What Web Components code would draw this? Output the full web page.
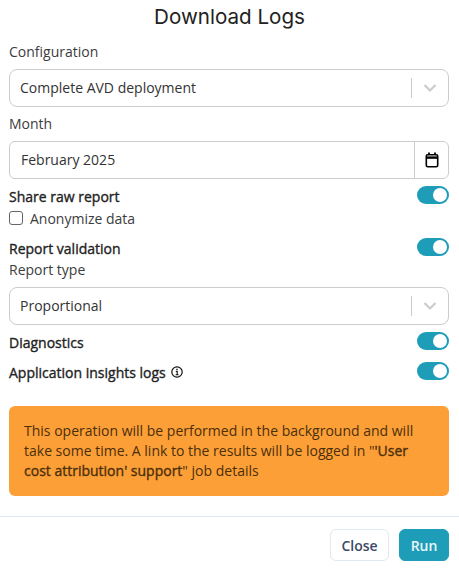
<!DOCTYPE html>
<html lang="en">
<head>
<meta charset="utf-8">
<title>Download Logs</title>
<style>
  html, body { margin: 0; background: #fff; }
  body { font-family: "Open Sans", "Liberation Sans", sans-serif; font-size: 14px; color: #333; }
  b { font-weight: 500; -webkit-text-stroke: .35px currentColor; }
</style>
</head>
<body>
<log-dialog heading="Download Logs">
  <form-field label="Configuration"><select-box value="Complete AVD deployment"></select-box></form-field>
  <form-field label="Month" style="margin-top:6px"><month-input value="February 2025"></month-input></form-field>
  <toggle-row style="margin-top:7px">Share raw report</toggle-row>
  <check-row>Anonymize data</check-row>
  <toggle-row style="margin-top:10px">Report validation</toggle-row>
  <form-field label="Report type" style="margin-top:3px"><select-box value="Proportional"></select-box></form-field>
  <toggle-row style="margin-top:7px">Diagnostics</toggle-row>
  <toggle-row style="margin-top:12px" info>Application insights logs</toggle-row>
  <alert-box style="margin-top:26px">This operation will be performed in the background and will take some time. A link to the results will be logged in "<b>'User</b> <b>cost attribution' support</b>" job details</alert-box>
  <action-button slot="footer" style="width:59px">Close</action-button>
  <action-button slot="footer" style="width:50px" primary>Run</action-button>
</log-dialog>

<script>
// each component gets its own shadow root, markup and styles live in the class
class LogDialog extends HTMLElement {
  constructor() {
    super();
    this.attachShadow({ mode: 'open' }).innerHTML = `
      <style>
        :host { display: flex; flex-direction: column; width: 459px; height: 571px; box-sizing: border-box; }
        h2 { margin: 0; height: 34px; text-align: center; font: 400 20.6px/34px Inter, "Open Sans", sans-serif; color: #222; }
        .body { display: flex; flex-direction: column; padding: 7px 10px 0 9px; }
        .footer { margin-top: 20px; border-top: 1px solid #e2e8f0; display: flex; justify-content: flex-end; gap: 10px; padding: 12px 10px 0; }
      </style>
      <h2></h2>
      <div class="body"><slot></slot></div>
      <div class="footer"><slot name="footer"></slot></div>`;
  }
  connectedCallback() {
    this.shadowRoot.querySelector('h2').textContent = this.getAttribute('heading');
  }
}

class FormField extends HTMLElement {
  constructor() {
    super();
    this.attachShadow({ mode: 'open' }).innerHTML = `
      <style>
        :host { display: block; }
        label { display: block; height: 22px; line-height: 22px; margin-bottom: 6px; color: #3c3c3c; }
      </style>
      <label></label><slot></slot>`;
  }
  connectedCallback() {
    this.shadowRoot.querySelector('label').textContent = this.getAttribute('label');
  }
}

class SelectBox extends HTMLElement {
  constructor() {
    super();
    this.attachShadow({ mode: 'open' }).innerHTML = `
      <style>
        :host { display: flex; align-items: center; height: 38px; box-sizing: border-box; border: 1px solid #ccc; border-radius: 8px; background: #fff; }
        .value { flex: 1; padding: 0 0 2px 10px; color: #333; }
        .sep { width: 1px; height: 20px; background: #ccc; }
        .arrow { width: 36px; display: flex; justify-content: center; }
      </style>
      <span class="value"></span>
      <span class="sep"></span>
      <span class="arrow">
        <svg width="14" height="14" viewBox="0 0 14 14"><path d="M1.5 4 L7 9.5 L12.5 4" fill="none" stroke="#ccc" stroke-width="2.2"/></svg>
      </span>`;
  }
  connectedCallback() {
    this.shadowRoot.querySelector('.value').textContent = this.getAttribute('value');
  }
}

class MonthInput extends HTMLElement {
  constructor() {
    super();
    this.attachShadow({ mode: 'open' }).innerHTML = `
      <style>
        :host { display: flex; align-items: stretch; height: 38px; box-sizing: border-box; border: 1px solid #ccc; border-radius: 6px; background: #fff; }
        .value { flex: 1; padding-left: 11px; line-height: 36px; color: #333; }
        .btn { width: 33px; border-left: 1px solid #ccc; display: flex; align-items: center; justify-content: center; }
      </style>
      <span class="value"></span>
      <span class="btn">
        <svg width="14" height="16" viewBox="0 0 14 16" fill="none" stroke="#000">
          <rect x="1.3" y="2.8" width="11.4" height="12" rx="1.5" stroke-width="1.6"/>
          <path d="M1.3 5.6 H12.7" stroke-width="2.4"/>
          <path d="M4 .5 V3 M10 .5 V3" stroke-width="1.8"/>
        </svg>
      </span>`;
  }
  connectedCallback() {
    this.shadowRoot.querySelector('.value').textContent = this.getAttribute('value');
  }
}

class ToggleRow extends HTMLElement {
  constructor() {
    super();
    this.attachShadow({ mode: 'open' }).innerHTML = `
      <style>
        :host { display: flex; align-items: center; justify-content: space-between; height: 18px; }
        .text { display: flex; align-items: center; gap: 5px; font-weight: 500; -webkit-text-stroke: .35px currentColor; color: #222; padding-top: 2px; }
        svg { display: none; }
        :host([info]) svg { display: block; }
        .switch { width: 32px; height: 18px; border-radius: 9px; background: #1e9db9; position: relative; }
        .switch::after { content: ""; position: absolute; top: 2px; right: 2px; width: 14px; height: 14px; border-radius: 50%; background: #fff; }
      </style>
      <span class="text"><span><slot></slot></span>
        <svg width="12" height="12" viewBox="0 0 12 12" fill="none" stroke="#111">
          <circle cx="6" cy="6" r="5.2" stroke-width="1.2"/>
          <path d="M4.8 5.4 H6.2 V8.8 M4.6 8.8 H7.6" stroke-width="1.1"/>
          <path d="M6 2.8 V4" stroke-width="1.4"/>
        </svg>
      </span>
      <span class="switch"></span>`;
  }
}

class CheckRow extends HTMLElement {
  constructor() {
    super();
    this.attachShadow({ mode: 'open' }).innerHTML = `
      <style>
        :host { display: flex; align-items: center; gap: 7px; height: 20px; margin-top: 4px; color: #3c3c3c; }
        .box { width: 14px; height: 14px; box-sizing: border-box; border: 1px solid #666; border-radius: 3px; background: #fff; }
      </style>
      <span class="box"></span><span><slot></slot></span>`;
  }
}

class AlertBox extends HTMLElement {
  constructor() {
    super();
    this.attachShadow({ mode: 'open' }).innerHTML = `
      <style>
        :host { display: block; box-sizing: border-box; height: 90px; padding: 15px 15px; border-radius: 6px; background: #fd9f37; color: #4a2f0c; line-height: 20px; }
      </style>
      <slot></slot>`;
  }
}

class ActionButton extends HTMLElement {
  constructor() {
    super();
    this.attachShadow({ mode: 'open' }).innerHTML = `
      <style>
        :host { display: flex; align-items: center; justify-content: center; height: 32px; box-sizing: border-box; border: 1px solid #e2e8f0; border-radius: 6px; background: #fff; color: #3d4a66; font-weight: 600; }
        :host([primary]) { background: #1e9db9; border-color: #1e9db9; color: #e9f7fa; }
      </style>
      <slot></slot>`;
  }
}

customElements.define('log-dialog', LogDialog);
customElements.define('form-field', FormField);
customElements.define('select-box', SelectBox);
customElements.define('month-input', MonthInput);
customElements.define('toggle-row', ToggleRow);
customElements.define('check-row', CheckRow);
customElements.define('alert-box', AlertBox);
customElements.define('action-button', ActionButton);
</script>
</body>
</html>
